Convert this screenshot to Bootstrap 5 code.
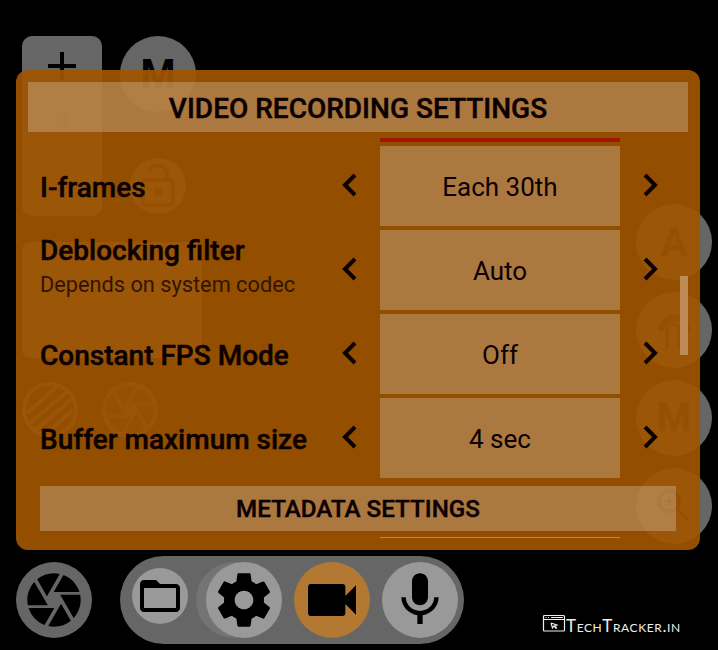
<!DOCTYPE html>
<html lang="en">
<head>
<meta charset="utf-8">
<meta name="viewport" content="width=device-width, initial-scale=1">
<title>Video recording settings</title>
<link href="https://cdn.jsdelivr.net/npm/bootstrap@5.3.0/dist/css/bootstrap.min.css" rel="stylesheet">
<style>
body{background:#000;color:#0b0000;font-family:Roboto,"Liberation Sans",sans-serif;width:718px;height:650px;overflow:hidden}
svg{display:block;flex:none}
.viewfinder{left:0;top:0;width:718px;height:650px}
.panel{margin:70px 18px 0 16px;height:480px;border-radius:12px;background:rgba(159,85,0,.92);padding:12px}
.light{background:rgba(237,237,237,.27)}
.heading{height:50px;padding-top:4px;font-size:28px;font-weight:500;line-height:1;-webkit-text-stroke:.45px}
.scroller{margin-top:6px;height:400px;padding:0 12px;overflow:hidden}
.alert-strip{width:240px;height:4px;margin:0 56px 4px 340px;background:#a31500}
.setting{height:80px;margin-bottom:4px}
.setting-name{width:300px;padding-top:4px;font-size:28px;font-weight:500;line-height:34px;-webkit-text-stroke:.45px}
.with-note{padding:0 0 4px}
.setting-note{font-size:21.75px;font-weight:400;line-height:34px;color:#321500;-webkit-text-stroke:0}
.setting-value{width:240px;height:80px;padding-top:2px;font-size:26px}
.arrow{width:40px;height:80px}
.arrow.next{width:56px;padding-left:20px}
.section{height:45px;margin-top:8px;padding-top:2px;font-size:24.200px;font-weight:500;line-height:1;-webkit-text-stroke:.4px}
.next-edge{width:240px;height:1px;margin:6px 0 0 340px;background:#b98a55}
.thumb{left:680px;top:276px;width:8px;height:79px;background:#bd8c56}
.dock{margin:6px 38px 0 16px;height:88px}
.round{width:76px;height:76px;border-radius:50%;background:#999;flex:none}
.pill{width:344px;height:88px;border-radius:44px;background:#666;margin-left:28px;padding-left:12px}
.shutter{background:#666}
.folder{width:56px;height:56px;margin-bottom:8px}
.gear{margin-left:18px;box-shadow:-10px 0 0 #747474}
.video{background:#b37932;margin:0 12px}
.brandmark{width:140px;height:24px;margin-left:78px;margin-top:48px;color:#eee;font-family:Lato,"Open Sans",sans-serif;font-size:17px;line-height:24px}
.brandmark span{font-variant:small-caps;letter-spacing:.6px;padding-top:3px}
</style>
<script src="https://cdn.jsdelivr.net/npm/bootstrap@5.3.0/dist/js/bootstrap.bundle.min.js"></script>
</head>
<body>
<svg class="viewfinder position-absolute" viewBox="0 0 718 650" font-family="Roboto" font-weight="700" text-anchor="middle">
  <g fill="#666">
    <rect x="22" y="36" width="80" height="180" rx="10"/>
    <rect x="22" y="242" width="180" height="116" rx="8"/>
    <circle cx="158" cy="74" r="38"/><circle cx="158" cy="186" r="28"/>
    <circle cx="674" cy="242" r="38"/><circle cx="674" cy="330" r="38"/><circle cx="674" cy="418" r="38"/><circle cx="674" cy="506" r="38"/>
  </g>
  <path d="M62 52v28M48 66h28" stroke="#000" stroke-width="4"/>
  <text x="158" y="88" font-size="40">M</text>
  <g fill="#1c1c1c">
    <text x="62" y="128" font-size="20" font-weight="400" fill="#333">0</text>
    <text x="674" y="256" font-size="40">A</text>
    <text x="674" y="431" font-size="40">M</text>
  </g>
  <g fill="none" stroke="#1c1c1c" stroke-width="4">
    <rect x="143" y="180" width="30" height="25" rx="3"/><path d="M149 172c2-9 16-9 18 0v8"/>
    <circle cx="158" cy="192" r="2"/>
    <path d="M667 349v-19q0-6 6-6t6 6v19" stroke-width="3"/>
    <path d="M661 331a13 13 0 1 1 26 0" stroke-width="6"/>
    <circle cx="669" cy="501" r="10"/><path d="M677 509l12 12M669 496v10M664 501h10" stroke-width="3"/>
  </g>
  <g fill="none" stroke="#5a5a5a" stroke-width="4">
    <circle cx="50" cy="410" r="26"/><path d="M27 413l31-27M28 425l41-35M34 432l40-35M45 435l28-25"/>
  </g>
  <circle cx="130" cy="410" r="28" fill="#555"/>
  <path transform="translate(101.200 381.200) scale(2.400)" fill="#222" d="M9.400 10.500l4.770-8.260C13.470 2.090 12.750 2 12 2c-2.400 0-4.600.85-6.320 2.250l3.660 6.350.06-.1zM21.540 9c-.92-2.920-3.150-5.260-6-6.340L11.880 9h9.660zm.26 1h-7.490l.29.5 4.760 8.250C21 16.970 22 14.610 22 12c0-.69-.07-1.350-.2-2zM8.540 12l-3.900-6.750C3.010 7.030 2 9.390 2 12c0 .69.07 1.350.2 2h7.490l-1.150-2zm-6.080 3c.92 2.920 3.150 5.260 6 6.340L12.120 15H2.460zm11.270 0l-3.900 6.760c.7.150 1.420.24 2.170.24 2.400 0 4.600-.85 6.320-2.250l-3.660-6.350-.93 1.600z"/>
</svg>

<main class="panel position-relative">
  <h1 class="heading light d-flex align-items-center justify-content-center m-0">VIDEO RECORDING SETTINGS</h1>
  <div class="scroller">
    <div class="alert-strip"></div>
    <div class="setting d-flex align-items-center">
      <div class="setting-name">I-frames</div>
      <div class="arrow d-flex align-items-center"><svg width="20" height="28" viewBox="0 0 20 28" fill="none" stroke="#0b0000" stroke-width="4"><path d="M15 3L5 13l10 10"/></svg></div>
      <div class="setting-value light d-flex align-items-center justify-content-center">Each 30th</div>
      <div class="arrow next d-flex align-items-center"><svg width="20" height="28" viewBox="0 0 20 28" fill="none" stroke="#0b0000" stroke-width="4"><path d="M5 3l10 10L5 23"/></svg></div>
    </div>
    <div class="setting d-flex align-items-center">
      <div class="setting-name with-note">Deblocking filter<div class="setting-note">Depends on system codec</div></div>
      <div class="arrow d-flex align-items-center"><svg width="20" height="28" viewBox="0 0 20 28" fill="none" stroke="#0b0000" stroke-width="4"><path d="M15 3L5 13l10 10"/></svg></div>
      <div class="setting-value light d-flex align-items-center justify-content-center">Auto</div>
      <div class="arrow next d-flex align-items-center"><svg width="20" height="28" viewBox="0 0 20 28" fill="none" stroke="#0b0000" stroke-width="4"><path d="M5 3l10 10L5 23"/></svg></div>
    </div>
    <div class="setting d-flex align-items-center">
      <div class="setting-name">Constant FPS Mode</div>
      <div class="arrow d-flex align-items-center"><svg width="20" height="28" viewBox="0 0 20 28" fill="none" stroke="#0b0000" stroke-width="4"><path d="M15 3L5 13l10 10"/></svg></div>
      <div class="setting-value light d-flex align-items-center justify-content-center">Off</div>
      <div class="arrow next d-flex align-items-center"><svg width="20" height="28" viewBox="0 0 20 28" fill="none" stroke="#0b0000" stroke-width="4"><path d="M5 3l10 10L5 23"/></svg></div>
    </div>
    <div class="setting d-flex align-items-center">
      <div class="setting-name">Buffer maximum size</div>
      <div class="arrow d-flex align-items-center"><svg width="20" height="28" viewBox="0 0 20 28" fill="none" stroke="#0b0000" stroke-width="4"><path d="M15 3L5 13l10 10"/></svg></div>
      <div class="setting-value light d-flex align-items-center justify-content-center">4 sec</div>
      <div class="arrow next d-flex align-items-center"><svg width="20" height="28" viewBox="0 0 20 28" fill="none" stroke="#0b0000" stroke-width="4"><path d="M5 3l10 10L5 23"/></svg></div>
    </div>
    <div class="section light d-flex align-items-center justify-content-center">METADATA SETTINGS</div>
    <div class="next-edge"></div>
  </div>
</main>
<div class="thumb position-absolute"></div>

<footer class="dock position-relative d-flex align-items-center">
  <div class="round shutter d-flex align-items-center justify-content-center">
    <svg width="64" height="64" viewBox="0 0 24 24"><path d="M9.400 10.500l4.770-8.260C13.470 2.090 12.750 2 12 2c-2.400 0-4.600.85-6.320 2.250l3.660 6.350.06-.1zM21.540 9c-.92-2.920-3.150-5.260-6-6.340L11.880 9h9.660zm.26 1h-7.490l.29.5 4.760 8.250C21 16.970 22 14.610 22 12c0-.69-.07-1.350-.2-2zM8.540 12l-3.900-6.750C3.010 7.030 2 9.390 2 12c0 .69.07 1.350.2 2h7.490l-1.150-2zm-6.080 3c.92 2.920 3.150 5.260 6 6.340L12.120 15H2.460zm11.270 0l-3.900 6.760c.7.150 1.420.24 2.170.24 2.400 0 4.600-.85 6.320-2.250l-3.660-6.350-.93 1.600z"/></svg>
  </div>
  <nav class="pill d-flex align-items-center flex-shrink-0">
    <div class="round folder d-flex align-items-center justify-content-center">
      <svg width="48" height="48" viewBox="0 0 24 24"><path d="M20 6h-8l-2-2H4c-1.100 0-2 .9-2 2v12c0 1.100.9 2 2 2h16c1.100 0 2-.9 2-2V8c0-1.100-.9-2-2-2zm0 12H4V8h16v10z"/></svg>
    </div>
    <div class="round gear d-flex align-items-center justify-content-center">
      <svg width="64" height="64" viewBox="0 0 24 24"><path d="M19.430 12.980c.04-.32.07-.64.07-.98s-.03-.66-.07-.98l2.110-1.650c.19-.15.24-.42.12-.64l-2-3.460c-.12-.22-.39-.3-.61-.22l-2.490 1c-.52-.4-1.080-.73-1.690-.98l-.38-2.650C14.460 2.180 14.250 2 14 2h-4c-.25 0-.46.18-.49.42l-.38 2.650c-.61.25-1.170.59-1.690.98l-2.490-1c-.23-.09-.49 0-.61.22l-2 3.460c-.13.22-.07.49.12.64l2.110 1.650c-.04.32-.07.65-.07.98s.03.66.07.98l-2.110 1.650c-.19.15-.24.42-.12.64l2 3.460c.12.22.39.3.61.22l2.490-1c.52.4 1.080.73 1.690.98l.38 2.650c.03.24.24.42.49.42h4c.25 0 .46-.18.49-.42l.38-2.650c.61-.25 1.170-.59 1.690-.98l2.490 1c.23.09.49 0 .61-.22l2-3.460c.12-.22.07-.49-.12-.64l-2.110-1.650zM12 15.500c-1.930 0-3.500-1.570-3.500-3.500s1.570-3.500 3.500-3.500 3.500 1.570 3.500 3.500-1.570 3.500-3.500 3.500z"/></svg>
    </div>
    <div class="round video d-flex align-items-center justify-content-center">
      <svg width="64" height="64" viewBox="0 0 24 24"><path d="M17 10.500V7c0-.55-.45-1-1-1H4c-.55 0-1 .45-1 1v10c0 .55.45 1 1 1h12c.55 0 1-.45 1-1v-3.500l4 4v-11l-4 4z"/></svg>
    </div>
    <div class="round d-flex align-items-center justify-content-center">
      <svg width="64" height="64" viewBox="0 0 24 24"><path d="M12 14c1.660 0 2.990-1.340 2.990-3L15 5c0-1.660-1.340-3-3-3S9 3.340 9 5v6c0 1.660 1.340 3 3 3zm5.300-3c0 3-2.540 5.100-5.300 5.100S6.700 14 6.700 11H5c0 3.410 2.720 6.230 6 6.720V21h2v-3.280c3.280-.48 6-3.300 6-6.720h-1.700z"/></svg>
    </div>
  </nav>
  <div class="brandmark d-flex align-items-center flex-shrink-0">
    <svg width="24" height="20" viewBox="0 0 24 20" fill="none" stroke="#eee" stroke-width="1.200"><rect x="1.500" y="1.500" width="21" height="15.500" rx="1"/><path d="M2 5.500h20M3.500 3.500h1M6 3.500h1M9 3.500h12M9 9l6 2-2.500 1 2.500 2.500M9 9l1.500 5 1.500-2 2 2.500"/></svg>
    <span>TechTracker.in</span>
  </div>
</footer>
</body>
</html>
